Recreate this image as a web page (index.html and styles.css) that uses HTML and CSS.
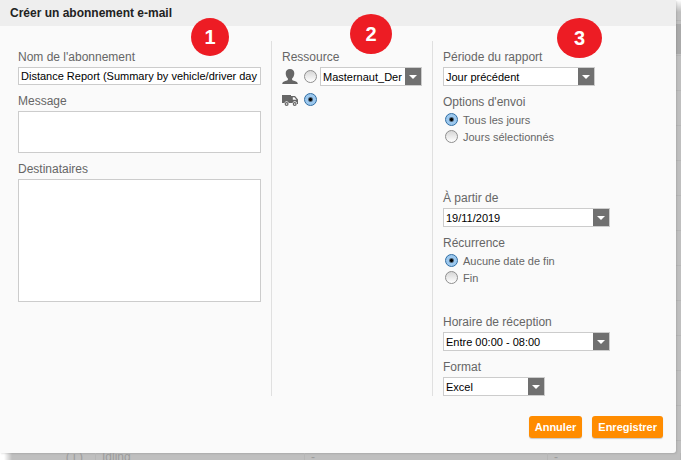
FILE: index.html
```html
<!DOCTYPE html>
<html lang="fr">
<head>
    <meta charset="UTF-8">
    <meta name="viewport" content="width=device-width, initial-scale=1.0">
    <title>Créer un abonnement e-mail</title>
    <link rel="stylesheet" href="styles.css">
</head>
<body>
    <form class="dialog">
        <header class="dialog-header">
            <h1>Créer un abonnement e-mail</h1>
        </header>

        <div class="columns">
            <section class="column">
                <span class="step step-1">1</span>
                <div class="field">
                    <label class="label" for="name">Nom de l'abonnement</label>
                    <input type="text" id="name" class="input" value="Distance Report (Summary by vehicle/driver day">
                </div>
                <div class="field">
                    <label class="label" for="message">Message</label>
                    <textarea id="message" class="input message"></textarea>
                </div>
                <div class="field">
                    <label class="label" for="recipients">Destinataires</label>
                    <textarea id="recipients" class="input recipients"></textarea>
                </div>
            </section>

            <section class="column">
                <span class="step step-2">2</span>
                <span class="label">Ressource</span>
                <div class="resource">
                    <svg class="icon" viewBox="0 0 16 16" aria-hidden="true">
                        <path d="M8 0C5.300 0 3.700 1.700 3.700 4.300c0 2.200.8 4.200 2.200 5.200v1.200C5.500 11.500 4.600 11.700 3.300 12 1.500 12.400.4 13.200.2 15h15.600c-.2-1.800-1.300-2.600-3.100-3-1.300-.3-2.200-.5-2.600-1.300V9.500c1.400-1 2.200-3 2.200-5.200C12.300 1.700 10.700 0 8 0z"/>
                    </svg>
                    <input type="radio" name="resource" class="radio" aria-label="Conducteur">
                    <span class="select grow">
                        <select aria-label="Groupe"><option>Masternaut_Der</option></select>
                    </span>
                </div>
                <div class="resource">
                    <svg class="icon" viewBox="0 0 16 16" aria-hidden="true">
                        <path d="M0 3h9v8H6.800a2.300 2.300 0 0 0-4.400 0H0z"/>
                        <path fill-rule="evenodd" d="M9 4h4l3 3.500V12h-1a2.300 2.300 0 0 0-4.500-1H9zM10.800 5.200v2.600h3.700L12.400 5.200z"/>
                        <path fill-rule="evenodd" d="M4.600 10a2 2 0 1 0 0 4 2 2 0 0 0 0-4zm0 1.200a.8.8 0 1 1 0 1.600.8.8 0 0 1 0-1.600z"/>
                        <path fill-rule="evenodd" d="M12.700 10a2 2 0 1 0 0 4 2 2 0 0 0 0-4zm0 1.200a.8.8 0 1 1 0 1.600.8.8 0 0 1 0-1.600z"/>
                    </svg>
                    <input type="radio" name="resource" class="radio" aria-label="Véhicule" checked>
                </div>
            </section>

            <section class="column">
                <span class="step step-3">3</span>
                <div class="field">
                    <label class="label" for="period">Période du rapport</label>
                    <span class="select medium">
                        <select id="period"><option>Jour précédent</option></select>
                    </span>
                </div>
                <fieldset class="field choices">
                    <legend class="label">Options d'envoi</legend>
                    <label class="choice"><input type="radio" name="days" class="radio" checked>Tous les jours</label>
                    <label class="choice"><input type="radio" name="days" class="radio">Jours sélectionnés</label>
                </fieldset>
                <div class="field">
                    <label class="label" for="start">À partir de</label>
                    <span class="select wide">
                        <input type="text" id="start" value="19/11/2019">
                    </span>
                </div>
                <fieldset class="field choices short">
                    <legend class="label">Récurrence</legend>
                    <label class="choice"><input type="radio" name="end" class="radio" checked>Aucune date de fin</label>
                    <label class="choice"><input type="radio" name="end" class="radio">Fin</label>
                </fieldset>
                <div class="field">
                    <label class="label" for="time">Horaire de réception</label>
                    <span class="select wide">
                        <select id="time"><option>Entre 00:00 - 08:00</option></select>
                    </span>
                </div>
                <div class="field">
                    <label class="label" for="format">Format</label>
                    <span class="select narrow">
                        <select id="format"><option>Excel</option></select>
                    </span>
                </div>
            </section>
        </div>

        <footer class="actions">
            <button type="button" class="btn">Annuler</button>
            <button type="submit" class="btn">Enregistrer</button>
        </footer>
    </form>

    <div class="backdrop-row">
        <span class="cell cell-icon">( i )</span>
        <span class="cell cell-name">Idling</span>
        <span class="cell cell-value">-</span>
        <span class="cell cell-last">-</span>
    </div>
</body>
</html>
```
FILE: styles.css
```css
:root {
    --surface: #fafafa;
    --header: #eeeeee;
    --backdrop: #bfbfbf;
    --backdrop-dark: #aaaaaa;
    --backdrop-line: #b6b6b6;
    --border: #cccccc;
    --text: #666666;
    --arrow: #707070;
    --orange: #ff8c00;
    --red: #ed1c24;
}

* {
    box-sizing: border-box;
    margin: 0;
    padding: 0;
}

body {
    height: 100vh;
    display: flex;
    flex-direction: column;
    overflow: hidden;
    font-family: "Liberation Sans", Arial, sans-serif;
    font-size: 12px;
    line-height: 16px;
    color: var(--text);
    background:
        linear-gradient(to bottom, #ffffff, transparent 12px),
        linear-gradient(to right, #ffffff 4px, transparent 12px),
        linear-gradient(to bottom, transparent 24px, var(--backdrop-dark) 24px 54px, transparent 54px),
        repeating-linear-gradient(to bottom, transparent 0 20px, var(--backdrop-line) 20px 21px, transparent 21px 35px),
        var(--backdrop);
}

.dialog {
    margin-right: 5px;
    padding-bottom: 15px;
    background: var(--surface);
    border-radius: 0 0 3px 0;
    box-shadow: 1px 1px 2px rgba(0, 0, 0, 0.1);
}

.dialog-header {
    padding: 5px 10px;
    background: var(--header);
}

.dialog-header h1 {
    font-size: 12px;
    font-weight: bold;
    color: #222222;
}

.columns {
    display: grid;
    grid-template-columns: 272fr 161fr 243fr;
    padding-top: 15px;
}

.column {
    position: relative;
    padding: 8px 10px 0;
    border-right: 1px solid #e0e0e0;
}

.column:first-child {
    padding-left: 18px;
}

.column:last-child {
    border-right: none;
}

.field {
    margin-bottom: 8px;
    border: none;
}

.field:last-child {
    margin-bottom: 0;
}

.label {
    display: block;
    margin-bottom: 2px;
}

.input {
    display: block;
    width: 100%;
    height: 18px;
    padding: 0 2px;
    border: 1px solid var(--border);
    background: #ffffff;
    color: #000000;
    font-family: inherit;
    font-size: 11px;
    resize: none;
}

.message {
    height: 42px;
}

.recipients {
    height: 123px;
}

.select {
    position: relative;
    display: flex;
    height: 19px;
    border: 1px solid var(--border);
    background: #ffffff;
}

.select select,
.select input {
    appearance: none;
    flex: 1;
    min-width: 0;
    padding: 0 18px 0 2px;
    border: none;
    background: none;
    color: #000000;
    font-family: inherit;
    font-size: 11px;
}

/* grey arrow button */
.select::before {
    content: "";
    position: absolute;
    top: 0;
    right: 0;
    width: 16px;
    height: 17px;
    background: var(--arrow);
    pointer-events: none;
}

.select::after {
    content: "";
    position: absolute;
    top: 7px;
    right: 4px;
    border: 4px solid transparent;
    border-top-color: #ffffff;
    border-bottom: none;
    pointer-events: none;
}

.medium {
    width: 152px;
}

.wide {
    width: 167px;
}

.narrow {
    width: 102px;
}

.grow {
    flex: 1;
    min-width: 0;
    margin-left: 3px;
}

.resource {
    display: flex;
    align-items: center;
    height: 19px;
    margin-bottom: 4px;
}

.icon {
    width: 16px;
    height: 16px;
    margin-right: 6px;
    fill: var(--text);
}

.radio {
    appearance: none;
    flex: none;
    width: 13px;
    height: 13px;
    border: 1px solid #8e8e8e;
    border-radius: 50%;
    background: linear-gradient(#d6d6d6, #ffffff);
}

.radio:checked {
    border-color: #2f6da3;
    background: radial-gradient(circle, #000000 0 1px, #9cc8ee 3px);
}

.choices {
    min-height: 88px;
}

.choices.short {
    min-height: 71px;
}

.choices .label {
    margin-bottom: 1px;
}

.choice {
    display: flex;
    align-items: center;
    gap: 5px;
    height: 17px;
    padding-left: 2px;
    font-size: 11px;
}

.actions {
    display: flex;
    justify-content: flex-end;
    gap: 10px;
    padding: 20px 13px 0;
}

.btn {
    height: 22px;
    padding: 0 6px;
    border: none;
    border-radius: 3px;
    background: var(--orange);
    box-shadow: 0 1px 1px rgba(0, 0, 0, 0.2);
    color: #ffffff;
    font-family: inherit;
    font-size: 11px;
    font-weight: bold;
    cursor: pointer;
}

/* numbered markers laid over the columns */
.step {
    position: absolute;
    width: 38px;
    height: 38px;
    border-radius: 50%;
    background: var(--red);
    color: #ffffff;
    font-size: 20px;
    font-weight: bold;
    line-height: 38px;
    text-align: center;
}

.step-1 {
    top: -23px;
    right: 42px;
}

.step-2 {
    top: -27px;
    right: 40px;
    width: 42px;
    height: 40px;
    line-height: 40px;
}

.step-3 {
    top: -23px;
    right: 74px;
    width: 45px;
    height: 40px;
    line-height: 40px;
}

/* table row showing under the dialog */
.backdrop-row {
    flex: 1;
    display: grid;
    grid-template-columns: 96fr 209fr 243fr 133fr;
    min-height: 0;
    overflow: hidden;
    color: #9c9c9c;
    line-height: 8px;
}

.cell {
    padding-left: 6px;
    border-right: 1px solid var(--backdrop-line);
}

.cell-icon {
    padding-right: 12px;
    text-align: right;
}
```
